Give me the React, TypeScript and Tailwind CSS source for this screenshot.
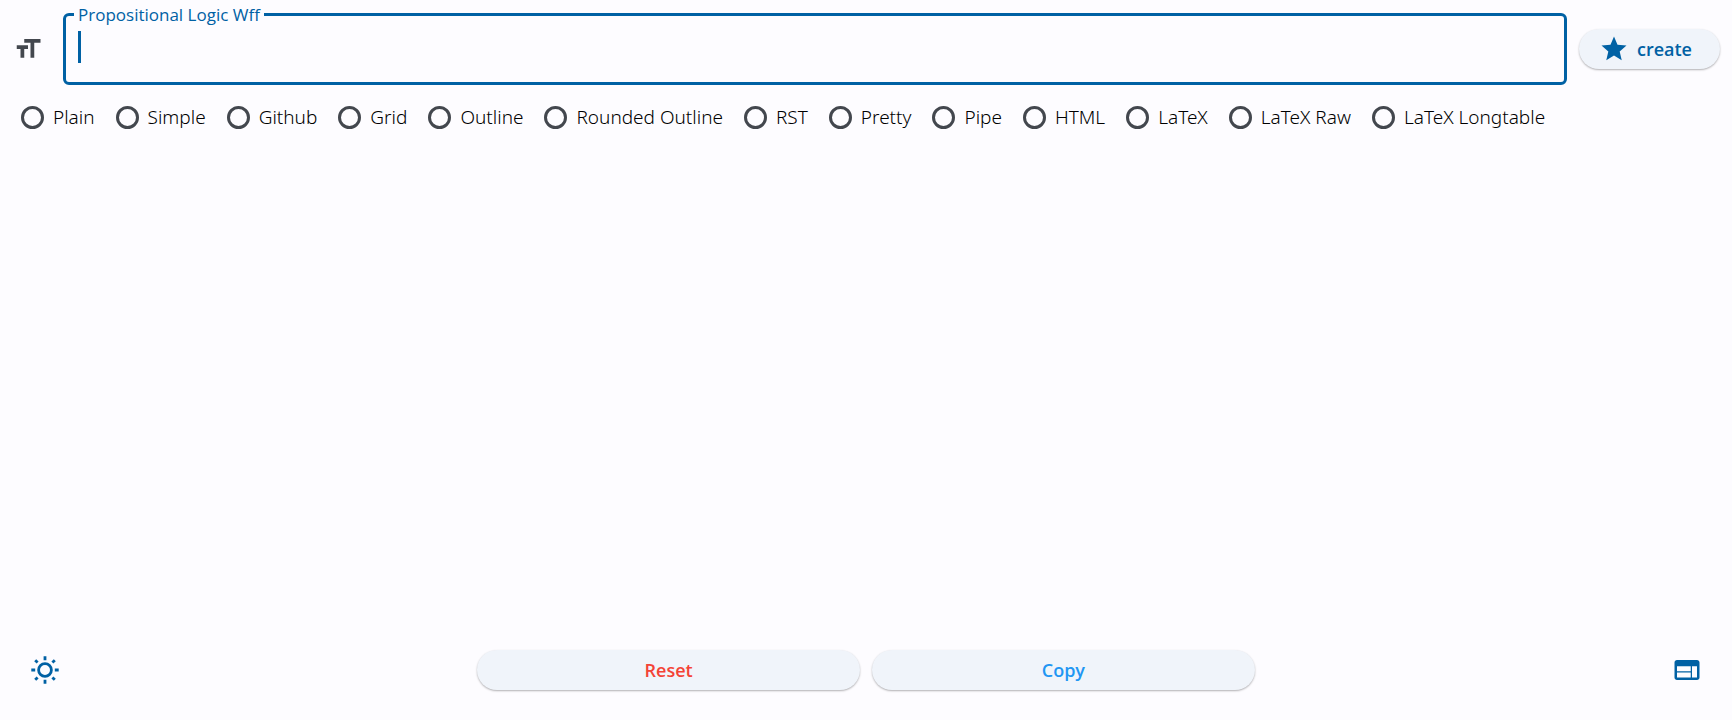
import { MdFormatSize, MdStar, MdWeb } from "react-icons/md";

const formats = [
  "Plain",
  "Simple",
  "Github",
  "Grid",
  "Outline",
  "Rounded Outline",
  "RST",
  "Pretty",
  "Pipe",
  "HTML",
  "LaTeX",
  "LaTeX Raw",
  "LaTeX Longtable",
];

const pill =
  "flex h-10 items-center justify-center rounded-full bg-[#f0f4fa] font-['Open_Sans',sans-serif] text-lg font-semibold shadow-[0_1px_2px_rgba(0,0,0,0.3)]";

function SunIcon() {
  return (
    <svg viewBox="0 0 28 28" className="size-7" fill="none" stroke="currentColor" strokeWidth="2.8" aria-hidden="true">
      <circle cx="14" cy="14" r="6.4" />
      <path d="M14 0.3v3.9M14 23.8v3.9M0.3 14h3.9M23.8 14h3.9M4.2 4.2l2.4 2.4M21.4 21.4l2.4 2.4M23.8 4.2l-2.4 2.4M6.6 21.4l-2.4 2.4" />
    </svg>
  );
}

export default function App() {
  return (
    <div className="flex min-h-screen flex-col bg-[#fdfcff] font-['Noto_Sans',sans-serif] text-[#1a1c1e]">
      <header className="flex items-center gap-3 pt-1 pr-3 pl-[13px]">
        <MdFormatSize className="mr-2 size-[30px] shrink-0 translate-y-1 text-[#43474e]" aria-hidden="true" />
        <fieldset className="relative min-w-0 flex-1 rounded-md border-[3px] border-[#0061a4] pr-3 pl-2">
          <legend className="px-1 pt-px font-['Open_Sans',sans-serif] text-[17px] leading-5 text-[#0061a4]">
            <label htmlFor="wff">Propositional Logic Wff</label>
          </legend>
          <input
            id="wff"
            type="text"
            className="block h-[57px] w-full bg-transparent px-1 text-xl caret-[#0061a4] outline-none"
          />
          <span className="absolute top-1.5 left-3 h-8 w-[3px] bg-[#0061a4]" aria-hidden="true" />
        </fieldset>
        <button type="button" className={`${pill} mt-2 gap-2 pr-7 pl-5 text-[#0061a4]`}>
          <MdStar className="size-[30px]" aria-hidden="true" />
          create
        </button>
      </header>

      <div role="radiogroup" aria-label="Table format" className="flex flex-wrap gap-x-[21px] px-[21px] pt-5">
        {formats.map((name) => (
          <label key={name} className="flex items-center gap-[9px] text-[19px] leading-6 font-light text-black">
            <input
              type="radio"
              name="format"
              value={name}
              className="size-[23px] appearance-none rounded-full border-[3px] border-[#43474e] checked:border-8 checked:border-[#0061a4]"
            />
            {name}
          </label>
        ))}
      </div>

      <main className="flex-1" />

      <footer className="flex items-center justify-between px-[30px] pb-[30px]">
        <button type="button" aria-label="Toggle theme" className="flex w-[30px] justify-center text-[#0061a4]">
          <SunIcon />
        </button>
        <div className="flex w-[46.5%] gap-3">
          <button type="button" className={`${pill} flex-1 text-[#f44336]`}>
            Reset
          </button>
          <button type="button" className={`${pill} flex-1 text-[#2196f3]`}>
            Copy
          </button>
        </div>
        <button type="button" aria-label="Open website" className="text-[#0061a4]">
          <MdWeb className="size-[30px]" aria-hidden="true" />
        </button>
      </footer>
    </div>
  );
}
